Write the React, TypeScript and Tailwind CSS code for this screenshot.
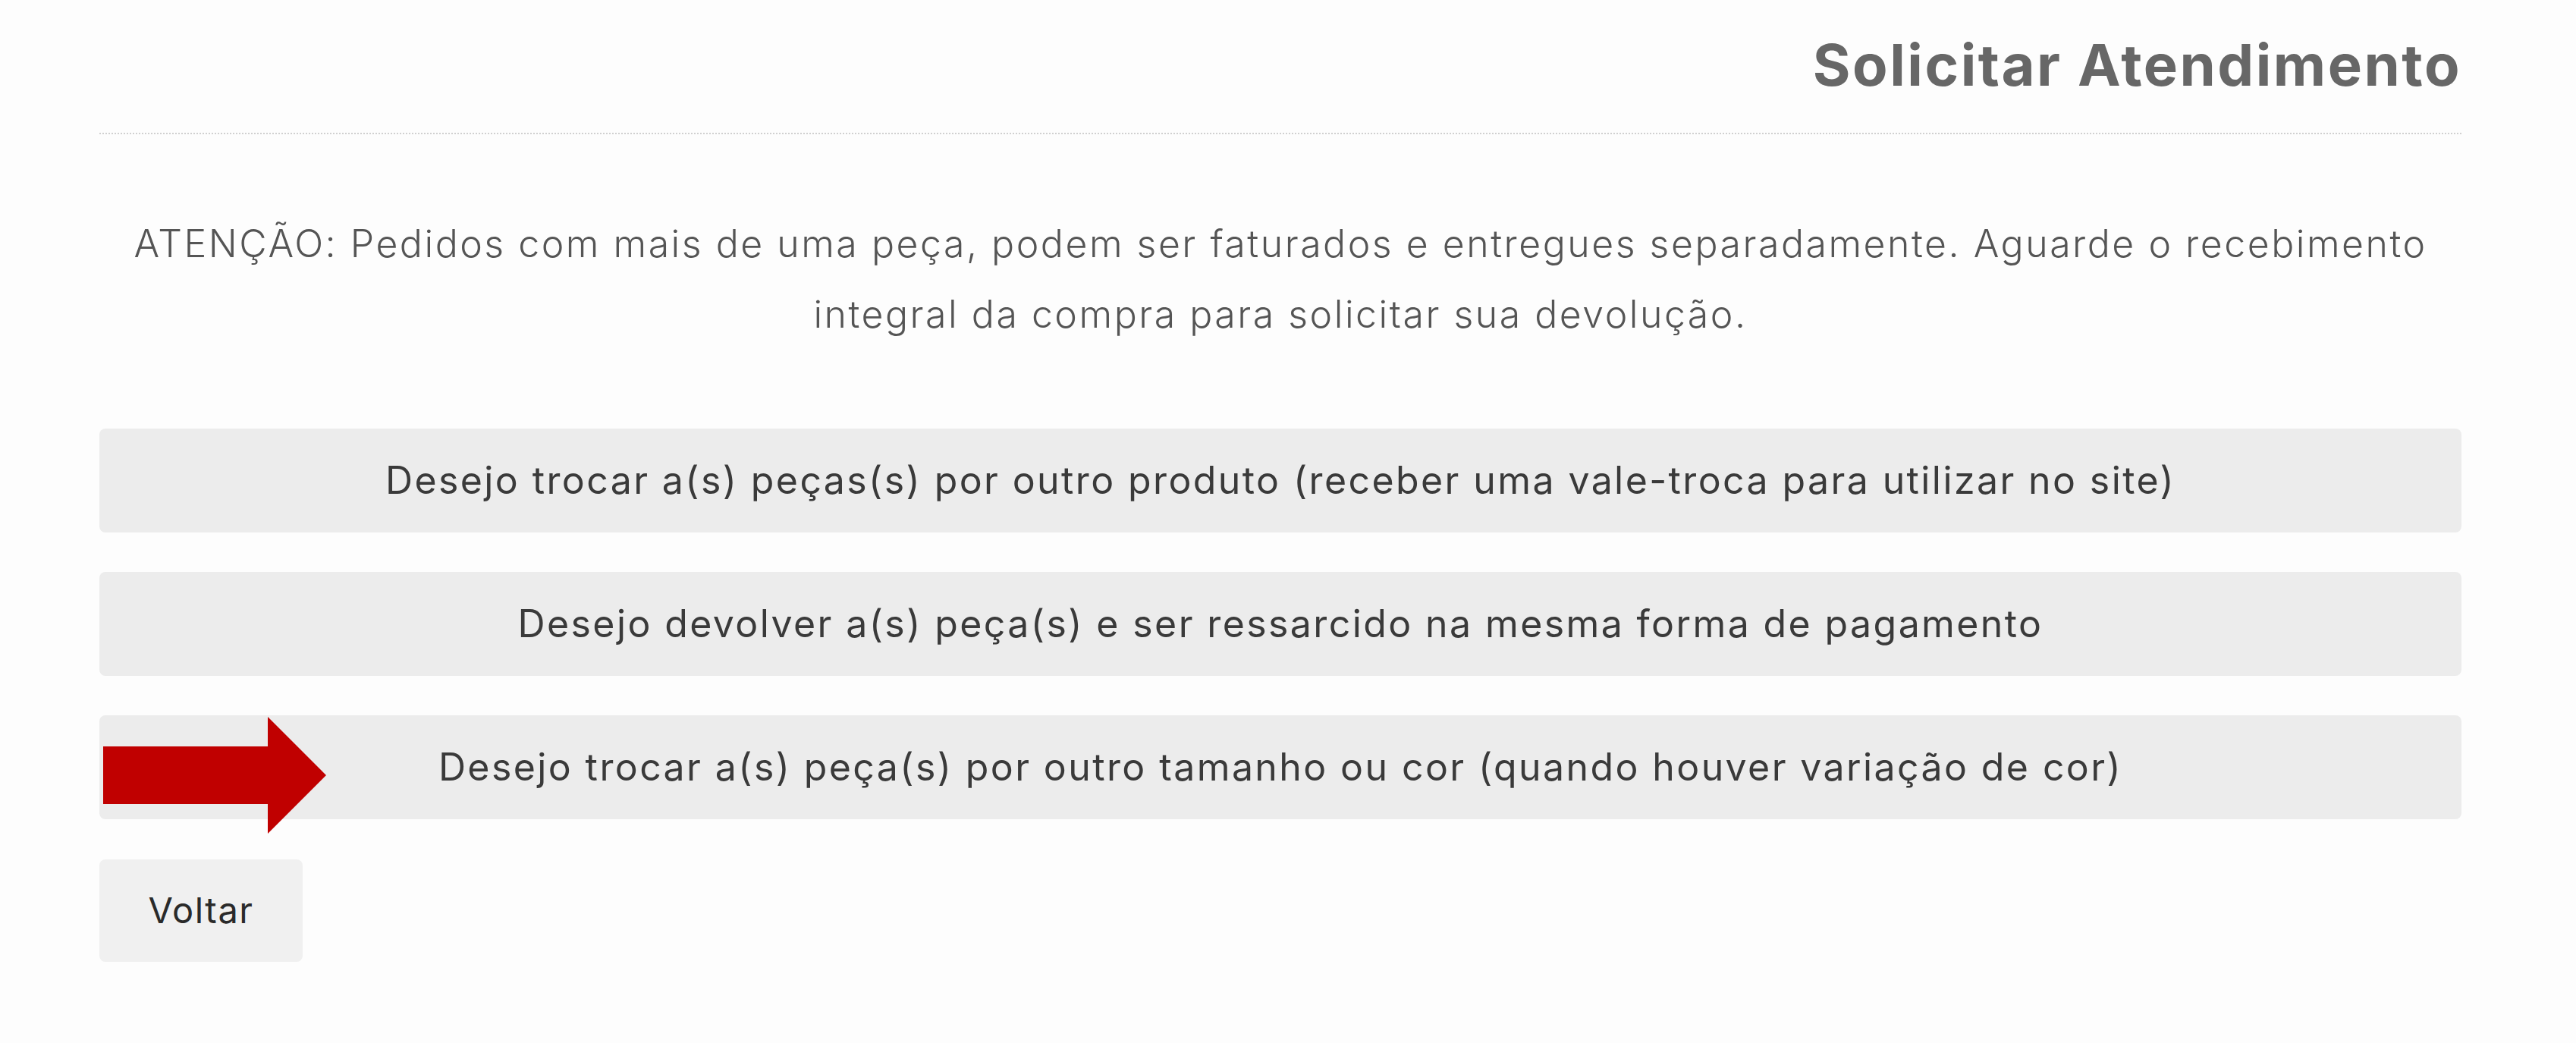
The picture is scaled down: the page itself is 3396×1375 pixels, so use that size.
import React from "react";

const options = [
  "Desejo trocar a(s) peças(s) por outro produto (receber uma vale-troca para utilizar no site)",
  "Desejo devolver a(s) peça(s) e ser ressarcido na mesma forma de pagamento",
  "Desejo trocar a(s) peça(s) por outro tamanho ou cor (quando houver variação de cor)",
];

const RedArrow = () => (
  <svg
    width="294"
    height="154"
    viewBox="0 0 294 154"
    className="absolute left-[5px] top-[2px]"
  >
    <polygon points="0,39 217,39 217,0 294,77 217,154 217,115 0,115" fill="#c00000" />
  </svg>
);

const App = () => {
  return (
    <div className="min-h-[1375px] w-full bg-[#fdfdfd] font-['Inter','Liberation_Sans',sans-serif]">
      <div className="ml-[131px] w-[3114px] pt-[35px]">
        <h1 className="text-right text-[76px] font-bold leading-[100px] tracking-[2.5px] text-[#676767]">
          Solicitar Atendimento
        </h1>
        <div className="mt-[40px] border-b-2 border-dotted border-[#d0d0d0]" />

        <p className="mx-auto mt-[98px] w-[3080px] text-center text-[50px] font-light leading-[93px] tracking-[2.5px] text-[#555555]">
          ATENÇÃO: Pedidos com mais de uma peça, podem ser faturados e entregues separadamente. Aguarde o recebimento
          integral da compra para solicitar sua devolução.
        </p>

        <div className="mt-[104px] flex flex-col gap-[52px]">
          {options.map((label, idx) => (
            <div
              key={idx}
              className="relative flex h-[137px] items-center justify-center rounded-[8px] bg-[#ececec] text-[50px] tracking-[2.4px] text-[#3a3a3a]"
            >
              {idx === 2 && <RedArrow />}
              <span>{label}</span>
            </div>
          ))}
        </div>

        <button className="mt-[53px] flex h-[135px] w-[268px] items-center justify-center rounded-[8px] bg-[#f0f0f0] text-[47px] tracking-[1.5px] text-[#2a2a2a]">
          Voltar
        </button>
      </div>
    </div>
  );
};

export default App;
